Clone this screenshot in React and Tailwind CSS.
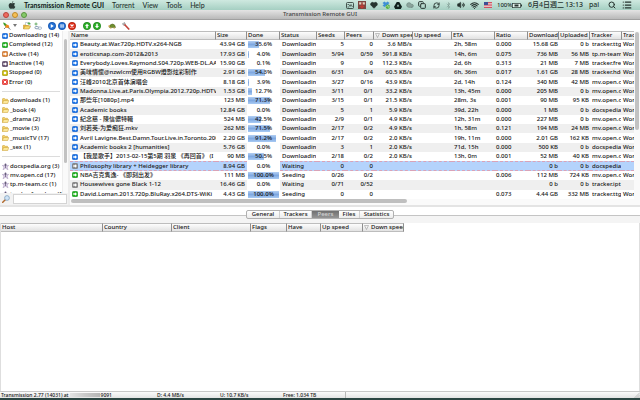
import React from 'react';
import { Search, List, Wifi, Bluetooth, Volume2, RefreshCw, Cloud, Heart, Copy } from 'lucide-react';

const FILTERS = [
  { label: 'Downloading (14)', icon: 'blue' },
  { label: 'Completed (12)', icon: 'green' },
  { label: 'Active (14)', icon: 'orange' },
  { label: 'Inactive (14)', icon: 'dark' },
  { label: 'Stopped (0)', icon: 'yellow' },
  { label: 'Error (0)', icon: 'red' },
  null,
  { label: 'downloads (1)', icon: 'folder' },
  { label: '_book (4)', icon: 'folder' },
  { label: '_drama (2)', icon: 'folder' },
  { label: '_movie (3)', icon: 'folder' },
  { label: '_musicTV (17)', icon: 'folder' },
  { label: '_sex (1)', icon: 'folder' },
  null,
  { label: 'docspedia.org (3)', icon: 'tracker' },
  { label: 'mv.open.cd (17)', icon: 'tracker' },
  { label: 'tp.m-team.cc (1)', icon: 'tracker' },
  { label: 'tracker.freedom (1)', icon: 'tracker' },
];

const COLUMNS = [
  { label: 'Name', width: 'w-[146px]' },
  { label: 'Size', width: 'w-[31px]' },
  { label: 'Done', width: 'w-[33px]' },
  { label: 'Status', width: 'w-[37px]' },
  { label: 'Seeds', width: 'w-[28px]' },
  { label: 'Peers', width: 'w-[29px]' },
  { label: 'Down speed', width: 'w-[39px]', sorted: true },
  { label: 'Up speed', width: 'w-[39px]' },
  { label: 'ETA', width: 'w-[43px]' },
  { label: 'Ratio', width: 'w-[33px]' },
  { label: 'Download', width: 'w-[31px]' },
  { label: 'Uploaded', width: 'w-[31px]' },
  { label: 'Tracker', width: 'w-[32px]' },
  { label: 'Trac', width: 'w-auto' },
];

// icon, name, size, done, status, seeds, peers, down, eta, ratio, downloaded, uploaded, tracker, tracker status
const TORRENTS = [
  ['blue', 'Beauty.at.War.720p.HDTV.x264-NGB', '43.94 GB', 35.6, 'Downloading', '5', '0', '3.6 MB/s', '2h, 58m', '0.000', '15.68 GB', '0 b', 'tracker.ttg', 'Working'],
  ['blue', 'eroticsnap.com-2012&2013', '17.93 GB', 4.0, 'Downloading', '5/94', '0/59', '591.8 KB/s', '14h, 6m', '0.075', '736 MB', '56 MB', 'tp.m-team', 'Working'],
  ['blue', 'Everybody.Loves.Raymond.S04.720p.WEB-DL.AAC', '15.90 GB', 0.1, 'Downloading', '9', '0', '112.3 KB/s', '2d, 6h', '0.313', '21 MB', '7 MB', 'tracker.free', 'Working'],
  ['blue', '美味情懷@nzwlcm使用RGBW燈影炫彩制作', '2.91 GB', 54.3, 'Downloading', '6/31', '0/4', '60.5 KB/s', '6h, 36m', '0.017', '1.61 GB', '28 MB', 'tracker.hdc', 'Working'],
  ['blue', '汪峰2010北京首体演唱会', '8.18 GB', 3.9, 'Downloading', '3/27', '0/16', '43.9 KB/s', '2d, 14h', '0.124', '340 MB', '42 MB', 'mv.open.cd', 'Working'],
  ['blue', 'Madonna.Live.at.Paris.Olympia.2012.720p.HDTV', '1.53 GB', 12.7, 'Downloading', '3/11', '0/1', '33.2 KB/s', '13h, 45m', '0.000', '205 MB', '0 b', 'mv.open.cd', 'Working'],
  ['blue', '那些年[1080p].mp4', '123 MB', 71.3, 'Downloading', '3/15', '0/1', '21.5 KB/s', '28m, 3s', '0.001', '90 MB', '95 KB', 'mv.open.cd', 'Working'],
  ['blue', 'Academic books', '12.84 GB', 0.0, 'Downloading', '5', '1', '5.9 KB/s', '39d, 22h', '0.000', '1 MB', '0 b', 'docspedia', 'Working'],
  ['blue', '紀念慈 - 陳信儂特輯', '524 MB', 42.5, 'Downloading', '2/9', '0/1', '4.9 KB/s', '12h, 31m', '0.000', '227 MB', '0 b', 'mv.open.cd', 'Working'],
  ['blue', '刘若英-为爱痴狂.mkv', '262 MB', 71.5, 'Downloading', '2/17', '0/2', '4.9 KB/s', '1h, 58m', '0.121', '194 MB', '24 MB', 'mv.open.cd', 'Working'],
  ['blue', 'Avril Lavigne.Best.Damn.Tour.Live.in.Toronto.2008', '2.20 GB', 91.2, 'Downloading', '2/17', '0/2', '2.0 KB/s', '19h, 11m', '0.000', '2.01 GB', '162 KB', 'mv.open.cd', 'Working'],
  ['blue', 'Academic books 2 [humanities]', '5.76 GB', 0.0, 'Downloading', '3', '1', '2.0 KB/s', '71d, 15h', '0.000', '500 KB', '0 b', 'docspedia', 'Working'],
  ['blue', '【我是歌手】2013-02-15第5期 羽泉 《再回首》 (I', '90 MB', 50.5, 'Downloading', '2/18', '0/2', '2.0 KB/s', '13h, 0m', '0.001', '52 MB', '40 KB', 'mv.open.cd', 'Working'],
  ['gray', 'Philosophy library + Heidegger library', '8.94 GB', 0.0, 'Waiting', '0', '0', '', '', '', '0 b', '0 b', 'docspedia', ''],
  ['green', 'NBA吉克隽逸- 《即刻出发》', '111 MB', 100.0, 'Seeding', '0/26', '0/2', '', '', '0.006', '112 MB', '724 KB', 'mv.open.cd', 'Working'],
  ['gray', 'Housewives gone Black 1-12', '16.46 GB', 0.0, 'Waiting', '0/71', '0/52', '', '', '', '0 b', '0 b', 'tracker.ipt', ''],
  ['green', 'David.Loman.2013.720p.BluRay.x264.DTS-WiKi', '4.43 GB', 100.0, 'Seeding', '0', '0', '', '', '0.073', '4.44 GB', '332 MB', 'tracker.ttg', 'Working'],
];

const SELECTED = 13;

const PEER_COLUMNS = [
  { label: 'Host', width: 'w-[102px]' },
  { label: 'Country', width: 'w-[69px]' },
  { label: 'Client', width: 'w-[79px]' },
  { label: 'Flags', width: 'w-[36px]' },
  { label: 'Have', width: 'w-[34px]' },
  { label: 'Up speed', width: 'w-[42px]' },
  { label: 'Down speed', width: 'w-[41px]', sorted: true },
];

const TABS = [
  { label: 'General', width: 'w-[33px]' },
  { label: 'Trackers', width: 'w-[32px]' },
  { label: 'Peers', width: 'w-[27px]' },
  { label: 'Files', width: 'w-[21px]' },
  { label: 'Statistics', width: 'w-[33px]' },
];

const BADGE_COLORS = {
  blue: ['#1a74e8', '#0a50bd'],
  green: ['#22b31f', '#0b8410'],
  orange: ['#e0873a', '#a8541a'],
  dark: ['#6b5573', '#3d2c48'],
  yellow: ['#c9b800', '#8f8200'],
  red: ['#f0453f', '#c01818'],
  gray: ['#8b8b8b', '#636363'],
};

function StateIcon({ kind }) {
  if (kind === 'folder') {
    return (
      <svg viewBox="0 0 14 12" className="w-[7px] h-[6px] shrink-0">
        <path d="M1 11V2q0-1 1-1h3l1.500 1.500H11V5" fill="#f3d268" stroke="#c99a2a" />
        <path d="M1 11l2-6h10.500l-2 6z" fill="#fbe79a" stroke="#c99a2a" />
      </svg>
    );
  }
  if (kind === 'tracker') {
    return (
      <svg viewBox="0 0 14 14" className="w-[7px] h-[7px] shrink-0">
        <path d="M7 0l1.700 4.500L13.500 5 10 8l2 5.500L7 10.500 2 13.500 4 8 .5 5l4.800-.5z" fill="#d9cbe6" stroke="#a595b8" strokeWidth="1" />
        <circle cx="7" cy="4" r="1.800" fill="#5d5570" />
        <path d="M7 6v4" stroke="#6d6480" strokeWidth="1.600" />
      </svg>
    );
  }
  const [fill, edge] = BADGE_COLORS[kind];
  return (
    <svg viewBox="0 0 12 12" className="w-[6px] h-[6px] shrink-0">
      <rect x="0.5" y="0.5" width="11" height="11" rx="3" fill={fill} stroke={edge} />
      {kind === 'red' ? (
        <path d="M3.500 3.500l5 5m0-5l-5 5" stroke="#fff" strokeWidth="2" />
      ) : kind === 'yellow' ? (
        <rect x="3.500" y="3.500" width="5" height="5" fill="#fff" />
      ) : (
        <path d="M2.500 4.500H6V2.500L10 6 6 9.500V7.500H2.500z" fill="#fff" />
      )}
    </svg>
  );
}

function Orb({ color, edge, children }) {
  return (
    <svg viewBox="0 0 16 16" className="w-2 h-2">
      <circle cx="8" cy="8" r="7.300" fill={color} stroke={edge} strokeWidth="1.400" />
      {children}
    </svg>
  );
}

function MenuBar() {
  return (
    <header className="flex items-center justify-between h-[10px] px-[8px] text-[7px] leading-[10px] text-[#26332f] bg-linear-to-b from-[#cfe9e0] to-[#a5cfc2]">
      <nav className="flex items-center gap-[8px] font-['Lato',sans-serif]">
        <svg viewBox="0 0 16 18" className="w-2 h-2" fill="#2d3b37">
          <path d="M11 0q.2 3-3 4.300Q8 1.300 11 0zM8 5.300c1.200 0 2-1 3.700-1 1.300 0 2.500.7 3.300 1.800-3 1.700-2.400 5.800.5 7-.8 2.200-2.300 4.600-4 4.600-1.300 0-1.700-.8-3.200-.8s-2 .8-3.200.8C2.500 17.700.500 13.500.500 10.300c0-3.800 2.400-5.900 4.600-5.900C6.500 4.400 7.200 5.300 8 5.300z" />
        </svg>
        <button className="font-bold text-[#111c19]">Transmission Remote GUI</button>
        <button>Torrent</button>
        <button>View</button>
        <button>Tools</button>
        <button>Help</button>
      </nav>
      <div className="flex items-center">
        <div className="flex items-center gap-[4px] mr-[7px]">
          <svg viewBox="0 0 16 14" className="w-2 h-[7px]">
            <rect x="1" y="1" width="14" height="12" rx="2" fill="none" stroke="#26332f" strokeWidth="1.600" />
            <path d="M3 5h3l2 4 2-4 3 5M3 10h3" fill="none" stroke="#26332f" strokeWidth="1.300" />
          </svg>
          <svg viewBox="0 0 14 14" className="w-2 h-2">
            <rect width="14" height="14" fill="#7b4640" />
            <path d="M2 2h4v4H2zM8 2h4v4H8z" fill="#e4cdbb" />
            <path d="M7 4v7M3.500 8.500L7 12l3.500-3.500" stroke="#c23a32" strokeWidth="2" fill="none" />
          </svg>
          <Heart className="w-2 h-2 fill-[#26332f]" />
          <svg viewBox="0 0 16 16" className="w-2 h-2">
            <path d="M5 1L1 4l3 2.500L1 9l4 3 3-2.500L11 12l4-3-3-2.500L15 4l-4-3-3 2.500z" fill="#3f8fd6" />
            <circle cx="11.500" cy="11.500" r="4.300" fill="#53b23b" />
            <path d="M9.500 11.500a2 2 0 113 1.800" stroke="#fff" fill="none" />
          </svg>
          <svg viewBox="0 0 16 14" className="w-2 h-[7px]">
            <path d="M5.500 0h5L16 9.500 13.500 14h-11L0 9.500zM8 4.500L5.500 9h5z" fill="#10201c" fillRule="evenodd" />
          </svg>
          <Cloud className="w-2 h-2 fill-[#8ba49c] text-[#6f8880]" />
          <Copy className="w-2 h-2" strokeWidth={3} />
        </div>
        <div className="flex items-center gap-[5px]">
          <RefreshCw className="w-[7px] h-[7px]" strokeWidth={3} />
          <Bluetooth className="w-[7px] h-[7px] text-[#7d9a90]" />
          <Volume2 className="w-2 h-2 fill-[#26332f]" />
          <Wifi className="w-[9px] h-[9px]" strokeWidth={3} />
          <svg viewBox="0 0 16 12" className="w-2 h-[6px]">
            <rect width="16" height="12" fill="#f2e8e8" />
            <path d="M0 1h16M0 4.300h16M0 7.600h16M0 11h16" stroke="#c9394a" strokeWidth="1.700" />
            <rect width="8" height="6" fill="#3c4f95" />
          </svg>
        </div>
        <span className="w-[15px] ml-[5px] text-[6px]">100%</span>
        <svg viewBox="0 0 20 10" className="w-[10px] h-[5px] mr-[6px]">
          <rect x="0.700" y="0.700" width="16.500" height="8.600" fill="#e6f2ee" stroke="#26332f" strokeWidth="1.400" />
          <path d="M5 3h8v4H5zM18 3h2v4h-2z" fill="#26332f" />
        </svg>
        <span className="w-[37px] whitespace-nowrap">6月4日週二</span>
        <span className="w-[24px]">13:13</span>
        <span className="w-[19px]">pai</span>
        <Search className="w-2 h-2 mr-[6px]" strokeWidth={3} />
        <List className="w-[10px] h-[10px]" strokeWidth={3} />
      </div>
    </header>
  );
}

function TitleBar() {
  return (
    <div className="grid grid-cols-[1fr_auto_1fr] items-center h-[10px] px-[3px] bg-linear-to-b from-[#e4e4e4] to-[#b9b9b9] border-b border-[#a0a0a0]">
      <div className="flex gap-[3px]">
        <button aria-label="Close" className="w-[6px] h-[6px] rounded-full bg-[#ef6a60] border border-[#b8443d]" />
        <button aria-label="Minimize" className="w-[6px] h-[6px] rounded-full bg-[#f6bf56] border border-[#bd8a2c]" />
        <button aria-label="Zoom" className="w-[6px] h-[6px] rounded-full bg-[#86c96a] border border-[#5a9440]" />
      </div>
      <h1 className="text-[6px] leading-[9px] text-[#444]">Transmission Remote GUI</h1>
    </div>
  );
}

function Toolbar() {
  return (
    <div className="flex items-center h-[11px] pl-[3px] bg-white">
      <button aria-label="Connect">
        <svg viewBox="0 0 16 16" className="w-2 h-2">
          <path d="M0 1l4 1 5 5-3 3-4-4z" fill="#3f9e2c" />
          <path d="M6 5l5 1 2 5-4 1-5-1z" fill="#ef8a1d" />
          <path d="M10 11l5 4M5 11l-3 3" stroke="#555" strokeWidth="1.500" />
        </svg>
      </button>
      <button aria-label="Connections" className="ml-[2px] mr-[6px]">
        <svg viewBox="0 0 8 6" className="w-[4px] h-[3px]"><path d="M0 0h8L4 6z" fill="#777" /></svg>
      </button>
      <div className="flex gap-[3px] mr-[6px]">
        <button aria-label="Add torrent">
          <svg viewBox="0 0 16 16" className="w-2 h-2">
            <path d="M5 1h6l3 3v8H5z" fill="#fff" stroke="#8fa0b0" />
            <path d="M1 14V6h4l1 1h5v2" fill="#e9b93d" stroke="#c08d22" />
            <path d="M1 14l3-6h11l-3 6z" fill="#f7d96c" stroke="#c08d22" />
            <path d="M12 0v6M9 3h6" stroke="#3ea33a" strokeWidth="1.600" />
          </svg>
        </button>
        <button aria-label="Add link">
          <svg viewBox="0 0 16 16" className="w-2 h-2">
            <path d="M4 1v6M1 4h6" stroke="#5ba65a" strokeWidth="1.800" />
            <rect x="2" y="9" width="7" height="4.500" rx="2" fill="none" stroke="#7d93ab" strokeWidth="1.800" />
            <rect x="8" y="10" width="7" height="4.500" rx="2" fill="none" stroke="#9db0c4" strokeWidth="1.800" />
          </svg>
        </button>
      </div>
      <div className="flex gap-[2px] mr-[7px]">
        <button aria-label="Start">
          <Orb color="#2371d6" edge="#0d4ba3"><path d="M5.500 4l6 4-6 4z" fill="#fff" /></Orb>
        </button>
        <button aria-label="Stop">
          <Orb color="#2371d6" edge="#0d4ba3"><path d="M5 4.500h2.200v7H5zM9 4.500h2.200v7H9z" fill="#fff" /></Orb>
        </button>
        <button aria-label="Remove">
          <Orb color="#e0311c" edge="#a81505"><path d="M5 5l6 6m0-6l-6 6" stroke="#fff" strokeWidth="2.200" /></Orb>
        </button>
      </div>
      <div className="flex gap-[2px] mr-[7px]">
        <button aria-label="Move up">
          <Orb color="#2eb02a" edge="#157d14"><path d="M8 3.500L12 8H9.500v4.500h-3V8H4z" fill="#fff" /></Orb>
        </button>
        <button aria-label="Move down">
          <Orb color="#2eb02a" edge="#157d14"><path d="M8 12.500L4 8h2.500V3.500h3V8H12z" fill="#fff" /></Orb>
        </button>
      </div>
      <button aria-label="Alternative speed limits" className="mr-[6px]">
        <svg viewBox="0 0 16 12" className="w-2 h-[6px]">
          <path d="M3 9q0-7 6-7 5 0 6 7z" fill="#6f8f2c" stroke="#4a5f1c" />
          <path d="M3 9q-3 0-2-4 2-2 3 1zM4 9h3v2H4zM11 9h3v2h-3z" fill="#c9a24a" />
        </svg>
      </button>
      <button aria-label="Options">
        <svg viewBox="0 0 16 16" className="w-2 h-2">
          <path d="M1 3q0 4 4 4l2-2q0-3-3-4.500L4 3.500z" fill="#b9b9b9" stroke="#8a8a8a" />
          <path d="M6 6l7.500 8" stroke="#c4443a" strokeWidth="3.400" strokeLinecap="round" />
        </svg>
      </button>
    </div>
  );
}

function Sidebar() {
  return (
    <aside className="flex flex-col w-[68px] shrink-0 bg-white">
      <div className="flex flex-1 min-h-0">
        <ul className="grid auto-rows-fr h-[168px] flex-1 min-w-0 pl-[2px]">
          {FILTERS.map((item, i) =>
            item ? (
              <li key={item.label} className="flex items-center min-h-0 min-w-0 overflow-hidden">
                <a href="#" className="flex items-center gap-[1px] whitespace-nowrap">
                  <StateIcon kind={item.icon} />
                  <span>{item.label}</span>
                </a>
              </li>
            ) : (
              <li key={i} className="flex items-center min-h-0 mr-[2px]">
                <hr className="w-full border-[#dcdcdc]" />
              </li>
            )
          )}
        </ul>
        <div className="w-[6px] pt-[8px] px-[1px] bg-[#fafafa] border-l border-[#eee]">
          <div className="h-[124px] rounded-full bg-[#c2c2c2]" />
        </div>
      </div>
      <label className="relative z-10 flex items-center gap-[3px] h-[12px] pl-[2px] pr-[1px] bg-[#f2f2f2]">
        <svg viewBox="0 0 16 16" className="w-2 h-2">
          <path d="M6.500 9.500L1.500 14.500" stroke="#b0682c" strokeWidth="3" strokeLinecap="round" />
          <circle cx="10" cy="6" r="4.800" fill="#cfe4f7" stroke="#7e9dbb" strokeWidth="1.500" />
        </svg>
        <input aria-label="Search" className="flex-1 min-w-0 h-[10px] px-[1px] bg-white border border-[#d4d4d4] outline-none" />
      </label>
    </aside>
  );
}

function HeaderCell({ label, sorted, last }) {
  return (
    <th className={`h-[9px] p-0 pl-[1px] font-medium text-left overflow-hidden whitespace-nowrap bg-linear-to-b from-[#fdfdfd] to-[#e2e2e2] border-y border-y-[#bdbdbd] ${last ? '' : 'border-r border-r-[#8e8e8e]'}`}>
      <div className="flex items-center gap-[2px] h-[7px] overflow-hidden">
        {sorted && (
          <svg viewBox="0 0 10 10" className="w-[5px] h-[5px] shrink-0">
            <path d="M1 1h8L5 9z" fill="none" stroke="#888" />
          </svg>
        )}
        <span>{label}</span>
      </div>
    </th>
  );
}

function DoneCell({ value }) {
  return (
    <td className="p-0 px-[1px] bg-white">
      <div className="relative h-[9px] text-center">
        <div
          className="absolute inset-y-px left-0 bg-linear-to-b from-[#b3cff3] via-[#7fa8e0] to-[#a9cbf4]"
          style={{ width: `${value}%` }}
        />
        <span className="relative">{value.toFixed(1)}%</span>
      </div>
    </td>
  );
}

function TorrentTable() {
  return (
    <table className="w-full h-[168px] table-fixed border-separate border-spacing-0">
      <colgroup>
        {COLUMNS.map((col) => <col key={col.label} className={col.width} />)}
      </colgroup>
      <thead>
        <tr className="h-[9px]">
          {COLUMNS.map((col, i) => (
            <HeaderCell key={col.label} label={col.label} sorted={col.sorted} last={i === COLUMNS.length - 1} />
          ))}
        </tr>
      </thead>
      <tbody>
        {TORRENTS.map(([icon, name, size, done, status, seeds, peers, down, eta, ratio, got, sent, tracker, trackerStatus], i) => {
          const cell = `p-0 overflow-hidden whitespace-nowrap ${i === SELECTED ? 'border-y border-dashed border-[#d9a3b8] leading-[7px]' : ''}`;
          return (
            <tr key={name} className={i === SELECTED ? 'bg-[#b4d3fc]' : i % 2 ? 'bg-[#efefef]' : 'bg-white'}>
              <td className={`${cell} pl-[2px]`}>
                <div className="flex items-center gap-[2px]">
                  <StateIcon kind={icon} />
                  <span>{name}</span>
                </div>
              </td>
              <td className={`${cell} pr-[2px] text-right`}>{size}</td>
              <DoneCell value={done} />
              <td className={`${cell} pl-[2px]`}><div className="mr-[1px] overflow-hidden">{status}</div></td>
              <td className={`${cell} pr-[1px] text-right`}>{seeds}</td>
              <td className={`${cell} pr-[1px] text-right`}>{peers}</td>
              <td className={`${cell} pr-[1px] text-right`}>{down}</td>
              <td className={cell} />
              <td className={`${cell} pl-[2px]`}>{eta}</td>
              <td className={`${cell} pl-[1px]`}>{ratio}</td>
              <td className={`${cell} pr-[1px] text-right`}>{got}</td>
              <td className={`${cell} pr-[1px] text-right`}>{sent}</td>
              <td className={`${cell} pl-[2px]`}><div className="mr-[1px] overflow-hidden">{tracker}</div></td>
              <td className={`${cell} pl-[1px]`}>{trackerStatus}</td>
            </tr>
          );
        })}
      </tbody>
    </table>
  );
}

function PeersPane() {
  return (
    <section className="flex flex-col flex-1 min-h-0 bg-white">
      <div className="relative flex justify-center pt-[3px] pb-[4px]">
        <div className="absolute inset-x-0 top-[8px] bottom-0 bg-[#f4f4f4] border-t border-[#c4c4c4]" />
        <div role="tablist" className="relative flex h-[9px] rounded-[2px] border border-[#b0b0b0] bg-linear-to-b from-white to-[#ececec] overflow-hidden">
          {TABS.map((tab) => (
            <button
              key={tab.label}
              role="tab"
              aria-selected={tab.label === 'Peers'}
              className={`${tab.width} leading-[7px] text-center whitespace-nowrap ${
                tab.label === 'Peers'
                  ? 'bg-linear-to-b from-[#707070] to-[#969696] text-[#d4d4d4]'
                  : 'border-r border-[#d0d0d0] last:border-r-0'
              }`}
            >
              {tab.label}
            </button>
          ))}
        </div>
      </div>
      <div className="flex-1 border-x border-[#dedede]">
        <table className="w-[403px] table-fixed border-separate border-spacing-0">
          <colgroup>
            {PEER_COLUMNS.map((col) => <col key={col.label} className={col.width} />)}
          </colgroup>
          <thead>
            <tr>
              {PEER_COLUMNS.map((col) => <HeaderCell key={col.label} label={col.label} sorted={col.sorted} />)}
            </tr>
          </thead>
        </table>
      </div>
    </section>
  );
}

function StatusBar() {
  return (
    <footer className="flex items-center h-[7px] text-[5px] leading-[6px] whitespace-nowrap bg-linear-to-b from-[#fbfbfb] to-[#e4e4e4] border-t border-[#c8c8c8]">
      <div className="flex items-center w-[157px] pl-[1px]">
        <span>Transmission 2.77 (14031) at</span>
        <span className="w-[30px] h-[4px] mx-[1px] bg-linear-to-r from-[#e4e4e4] via-[#c9c9c9] to-[#b5b5b5]" />
        <span>9091</span>
      </div>
      <span className="w-[63px]">D: 4.4 MB/s</span>
      <span className="w-[63px]">U: 10.7 KB/s</span>
      <span className="w-[63px] border-r border-[#b8b8b8]">Free: 1.034 TB</span>
      <svg viewBox="0 0 12 12" className="w-[6px] h-[6px] ml-auto" stroke="#8c8c8c">
        <path d="M1 12L12 1M5 12l7-7M9 12l3-3" />
      </svg>
    </footer>
  );
}

export default function App() {
  return (
    <div className="flex flex-col h-screen overflow-hidden bg-white font-['Noto_Sans','Noto_Sans_CJK_SC',sans-serif] font-medium text-[6px] leading-[9px] text-[#161616]">
      <MenuBar />
      <TitleBar />
      <Toolbar />
      <main className="flex h-[174px] shrink-0">
        <Sidebar />
        <div className="w-[2px] bg-[#ececec]" />
        <div className="flex flex-col flex-1 min-w-0">
          <div className="flex">
            <div className="flex-1 min-w-0 overflow-hidden">
              <TorrentTable />
            </div>
            <div className="w-[6px] px-[1px] pt-[1px] bg-[#fafafa]">
              <div className="h-[98px] rounded-full bg-[#c2c2c2]" />
            </div>
          </div>
          <div className="h-[6px] pl-[1px] bg-[#fafafa]">
            <div className="w-[59%] h-[4px] rounded-full bg-[#bfbfbf]" />
          </div>
        </div>
      </main>
      <div className="h-[2px] shrink-0 bg-[#e4e4e4]" />
      <PeersPane />
      <StatusBar />
      <div className="h-[2px] shrink-0 bg-[#2c4643]" />
    </div>
  );
}
